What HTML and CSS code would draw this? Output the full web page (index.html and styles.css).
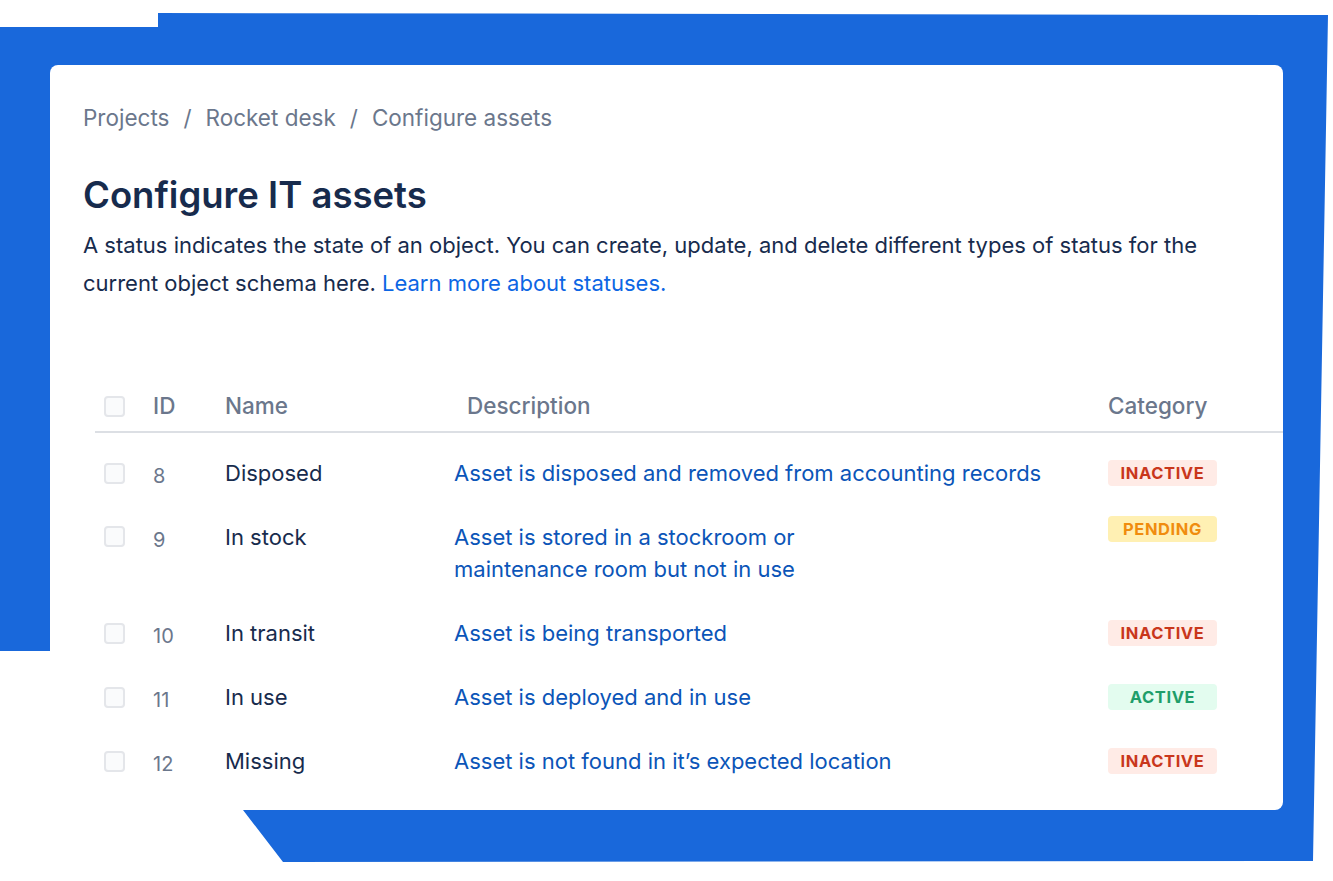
FILE: index.html
```html
<!DOCTYPE html>
<html lang="en">
<head>
    <meta charset="UTF-8">
    <title>Configure IT assets</title>
    <meta name="viewport" content="width=device-width, initial-scale=1.0">
    <link rel="stylesheet" href="styles.css">
</head>
<body>
    <svg class="backdrop" width="1333" height="881" viewBox="0 0 1333 881">
        <polygon points="0,27 158,27 158,13 1328,15 1313,861 283,862 243,810 60,810 60,651 0,651" fill="#1968db"/>
    </svg>

    <main class="card">
        <nav class="crumbs">
            <span>Projects</span>
            <span class="sep">/</span>
            <span>Rocket desk</span>
            <span class="sep">/</span>
            <span>Configure assets</span>
        </nav>

        <h1 class="title">Configure IT assets</h1>
        <p class="intro">A status indicates the state of an object. You can create, update, and delete different types of status for the current object schema here. <a href="#" class="link">Learn more about statuses.</a></p>

        <div class="table">
            <div class="row head">
                <span class="check"></span>
                <span>ID</span>
                <span>Name</span>
                <span class="head-desc">Description</span>
                <span>Category</span>
            </div>

            <div class="body">
                <div class="row">
                    <span class="check"></span>
                    <span class="id">8</span>
                    <span class="name">Disposed</span>
                    <span class="desc">Asset is disposed and removed from accounting records</span>
                    <span class="badge inactive">Inactive</span>
                </div>
                <div class="row tall">
                    <span class="check"></span>
                    <span class="id">9</span>
                    <span class="name">In stock</span>
                    <span class="desc">Asset is stored in a stockroom or<br>maintenance room but not in use</span>
                    <span class="badge pending">Pending</span>
                </div>
                <div class="row">
                    <span class="check"></span>
                    <span class="id">10</span>
                    <span class="name">In transit</span>
                    <span class="desc">Asset is being transported</span>
                    <span class="badge inactive">Inactive</span>
                </div>
                <div class="row">
                    <span class="check"></span>
                    <span class="id">11</span>
                    <span class="name">In use</span>
                    <span class="desc">Asset is deployed and in use</span>
                    <span class="badge active">Active</span>
                </div>
                <div class="row">
                    <span class="check"></span>
                    <span class="id">12</span>
                    <span class="name">Missing</span>
                    <span class="desc">Asset is not found in it’s expected location</span>
                    <span class="badge inactive">Inactive</span>
                </div>
            </div>
        </div>
    </main>
</body>
</html>
```

FILE: styles.css
```css
body {
    margin: 0;
    height: 881px;
    position: relative;
    overflow: hidden;
    background: #fff;
    font-family: Inter, "Noto Sans", sans-serif;
    color: #172b4d;
}

.backdrop {
    position: absolute;
    top: 0;
    left: 0;
}

.card {
    position: relative;
    margin: 65px 0 0 50px;
    width: 1233px;
    height: 745px;
    box-sizing: border-box;
    padding: 39px 0 0 33px;
    background: #fff;
    border-radius: 8px;
    overflow: hidden;
}

.crumbs {
    display: flex;
    gap: 14px;
    font-size: 22.5px;
    line-height: 28px;
    color: #6b778c;
}

.title {
    margin: 41px 0 0;
    font-size: 36.5px;
    line-height: 44px;
    font-weight: 600;
    color: #172b4d;
}

.intro {
    margin: 9px 0 0;
    max-width: 1160px;
    font-size: 22px;
    line-height: 38px;
    color: #172b4d;
}

.link {
    color: #0c66e4;
    text-decoration: none;
}

.table {
    margin: 88px 0 0 12px;
}

.row {
    display: grid;
    grid-template-columns: 49px 72px 229px 654px auto;
    align-items: center;
    padding: 16px 0 16px 9px;
    font-size: 22px;
    line-height: 32px;
}

.head {
    padding: 0 0 9px 9px;
    border-bottom: 2px solid #dcdfe4;
    color: #6b778c;
    font-size: 22.5px;
    font-weight: 500;
}

.head-desc {
    padding-left: 13px;
}

.body {
    padding-top: 8px;
}

.tall {
    align-items: start;
}

.check {
    width: 17px;
    height: 17px;
    border: 2px solid #e4e6ea;
    border-radius: 4px;
    background: #fafbfc;
}

.tall .check {
    margin-top: 5px;
}

.id {
    height: 32px;
    box-sizing: border-box;
    padding-top: 3px;
    font-size: 20px;
    color: #6b778c;
}

.name {
    color: #172b4d;
}

.desc {
    color: #0b55b8;
}

.badge {
    width: 109px;
    height: 26px;
    line-height: 26px;
    border-radius: 4px;
    text-align: center;
    font-size: 16.5px;
    font-weight: 700;
    letter-spacing: 0.6px;
    text-transform: uppercase;
}

.tall .badge {
    margin-top: -5px;
}

.inactive {
    background: #ffebe6;
    color: #c9371c;
}

.pending {
    background: #fff0b3;
    color: #f08c0e;
}

.active {
    background: #e3fcef;
    color: #1f9e6a;
}
```
